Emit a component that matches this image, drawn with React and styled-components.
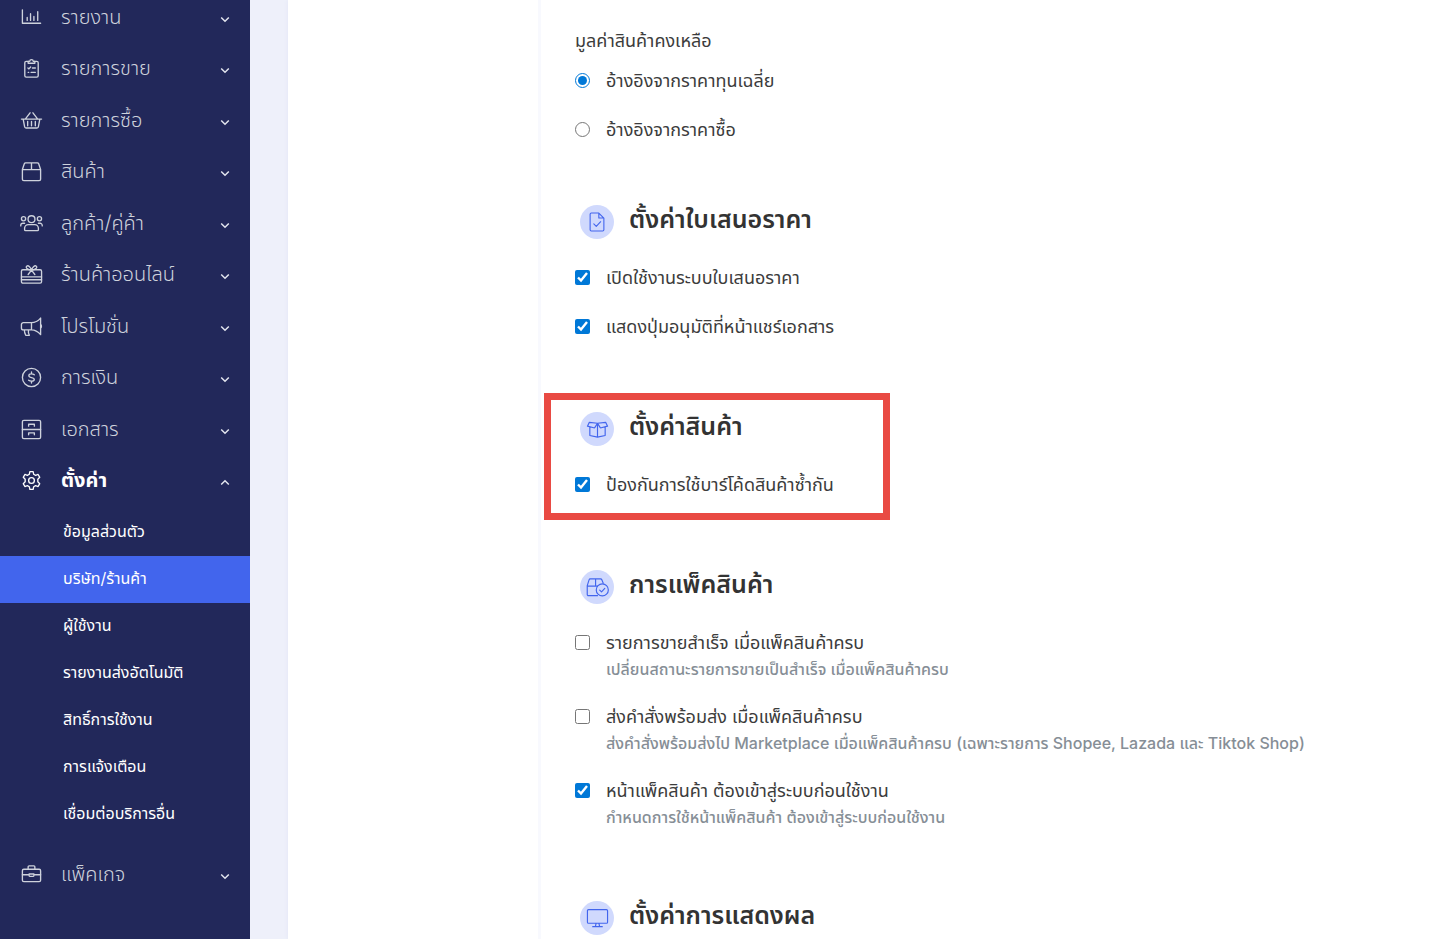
import React, { useState } from "react";
import styled, { createGlobalStyle, css } from "styled-components";

const GlobalStyle = createGlobalStyle`
  *, *::before, *::after { box-sizing: border-box; }
  body {
    margin: 0;
    background: #eef0fa;
    color: #3c3c3c;
    font-family: Inter, "Noto Sans Thai", "Noto Sans", sans-serif;
  }
`;

const Page = styled.div`
  display: flex;
  min-height: 100vh;
  max-height: 100vh;
  overflow: hidden;
`;

const Sidebar = styled.nav`
  flex: 0 0 250px;
  background: #22285a;
  overflow: hidden;
`;

const MenuList = styled.ul`
  list-style: none;
  margin: -7px 0 0;
  padding: 0;
`;

const MenuEntry = styled.li`
  &:nth-child(even) { margin-bottom: 1px; }
`;

const MenuButton = styled.button`
  display: flex;
  align-items: center;
  width: 100%;
  height: 51px;
  padding: 0 19px 3px 20px;
  border: 0;
  background: none;
  color: ${(p) => (p.$open ? "#ffffff" : "#ced2dc")};
  font-family: inherit;
  font-size: 20px;
  font-weight: ${(p) => (p.$open ? 700 : 300)};
  text-align: left;
  cursor: pointer;
`;

const MenuLabel = styled.span`
  flex: 1;
  margin-left: 18px;
  line-height: 24px;
  white-space: nowrap;
`;

const Submenu = styled.ul`
  list-style: none;
  margin: 2px 0 0;
  padding: 0 0 11px;
`;

const SubLink = styled.a`
  display: block;
  height: 47px;
  padding-left: 63px;
  line-height: 45px;
  font-size: 16px;
  color: #ffffff;
  text-decoration: none;
  white-space: nowrap;
  ${(p) => p.$active && css`background: #4265ed;`}
`;

const Main = styled.main`
  flex: 1;
  display: grid;
  grid-template-columns: 253px 1fr;
  margin-left: 38px;
  min-width: 0;
  background: #ffffff;
  box-shadow: 0 0 4px #e2e5f4;
`;

const Aside = styled.div`
  border-right: 3px solid #f8f9fe;
`;

const Content = styled.div`
  padding: 25px 34px 0;
  min-width: 0;
`;

const RadioGroup = styled.fieldset`
  margin: 0 0 51px;
  padding: 0;
  border: 0;
`;

const GroupTitle = styled.legend`
  padding: 0;
  height: 31px;
  line-height: 31px;
  font-size: 18px;
`;

const Section = styled.section`
  position: relative;
  width: fit-content;
  margin-bottom: 61px;
`;

const Highlight = styled.div`
  position: absolute;
  inset: -19px -56px -11px -31px;
  border: 7px solid #e94a43;
  pointer-events: none;
`;

const SectionHead = styled.header`
  display: flex;
  align-items: center;
  height: 34px;
  margin: 0 0 14px 5px;
  gap: 15px;
`;

const Badge = styled.span`
  display: grid;
  place-items: center;
  width: 34px;
  height: 34px;
  border-radius: 50%;
  background: #d0d9fd;
  color: #4265ed;
`;

const SectionTitle = styled.h2`
  margin: 0;
  padding-bottom: 6px;
  line-height: 30px;
  font-size: 25px;
  font-weight: 600;
  color: #333333;
  white-space: nowrap;
`;

const OptionRow = styled.label`
  display: grid;
  grid-template-columns: 15px auto;
  column-gap: 16px;
  align-items: center;
  width: fit-content;
  padding: 12px 0;
  cursor: pointer;
`;

const Tick = styled.input`
  width: 15px;
  height: 15px;
  margin: 0;
  accent-color: #0078d7;
`;

const OptionText = styled.span`
  line-height: 25px;
  font-size: 18px;
  white-space: nowrap;
`;

const OptionNote = styled.small`
  grid-column: 2;
  padding-top: 4px;
  line-height: 21px;
  font-size: 16px;
  font-weight: 500;
  color: #868e96;
  white-space: nowrap;
`;

const Svg = ({ size = 23, w = 1.4, children }) => (
  <svg width={size} height={size} viewBox="0 0 24 24" fill="none" stroke="currentColor"
    strokeWidth={w} strokeLinecap="round" strokeLinejoin="round" aria-hidden="true">
    {children}
  </svg>
);

const icons = {
  chart: <path d="M2.500 4v14h19M7.500 15v-3M11 15V8M14.500 15v-4M18.500 15V6" />,
  clipboard: <><path d="M9 4.500H6.500a1.500 1.500 0 0 0-1.500 1.500v13.500A1.500 1.500 0 0 0 6.500 21h11a1.500 1.500 0 0 0 1.500-1.500V6A1.500 1.500 0 0 0 17.500 4.500H15" /><path d="M8.500 6.500h7V4.500h-1.700a1.800 1.800 0 0 0-3.600 0H8.500z" /><path d="M8.300 11.500l1 .9 1.800-2M13 11.500h3M8.500 16h.6M11.500 16H16" /></>,
  basket: <path d="M1.500 10.500h21M3.300 10.500l1.500 8a1.500 1.500 0 0 0 1.500 1.300h11.400a1.500 1.500 0 0 0 1.500-1.300l1.500-8M5.500 10.500l5-6.500M18.500 10.500l-5-6.500M8 13v4.500M12 13v4.500M16 13v4.500" />,
  box: <path d="M2.500 10v10a1.500 1.500 0 0 0 1.500 1.500h16a1.500 1.500 0 0 0 1.500-1.500V10M2.500 10l2-6A1.500 1.500 0 0 1 6 3h12a1.500 1.500 0 0 1 1.500 1l2 6zM12 3v7" />,
  people: <><circle cx="12" cy="7.500" r="3.600" /><circle cx="3.700" cy="7" r="2.200" /><circle cx="20.300" cy="7" r="2.200" /><path d="M5.800 19.500a1 1 0 0 1-1-1V17a3.800 3.800 0 0 1 3.800-3.800h6.800a3.800 3.800 0 0 1 3.800 3.800v1.500a1 1 0 0 1-1 1zM.8 14.500v-.5a2.300 2.300 0 0 1 2.300-2.300h1.700M23.200 14.500v-.5a2.300 2.300 0 0 0-2.300-2.300h-1.700" /></>,
  gift: <><rect x="1.500" y="7" width="21" height="14" rx="1.500" /><path d="M1.500 14.500h21M1.500 17.500h21M12 7.500L8.500 12M12 7.500l3.500 4.500M12 7.500C11 4 8.500 2 7 3.300S7.500 7 12 7.500c4.500-.5 6.500-2.900 5-4.200S13 4 12 7.500z" /></>,
  horn: <path d="M12 8H3.500a2 2 0 0 0-2 2v3.500a2 2 0 0 0 2 2H12zM12 8c4 0 7.500-2.500 9.500-4.800v17.300c-2-2.300-5.500-5-9.500-5M21.500 9.800c1.200.8 1.200 3.200 0 4M4.500 15.500c0 2 .5 3.700 1.500 5.700h3.800c-1-2-1.300-3.700-1-5.700" />,
  coin: <><circle cx="12" cy="12" r="9.500" /><path d="M12 6.200v2M12 15.800v2M14.900 9.200c-.8-.7-1.800-1-2.900-1-1.600 0-2.800.7-2.800 1.900 0 2.700 5.700 1.200 5.700 3.900 0 1.200-1.300 1.800-2.900 1.800-1.200 0-2.200-.3-3-1" /></>,
  cabinet: <><rect x="2.500" y="2.500" width="19" height="19" rx="1.500" /><path d="M2.500 12h19M9 8.500V6.500h6v2M9 17.500v-2h6v2" /></>,
  gear: <><circle cx="12" cy="12" r="3" /><path d="M10.300 2.800h3.400l.6 2.700 2 1.100 2.600-.9 1.700 3-2 1.900v2.800l2 1.900-1.700 3-2.600-.9-2 1.100-.6 2.700h-3.400l-.6-2.700-2-1.100-2.600.9-1.700-3 2-1.900v-2.800l-2-1.900 1.700-3 2.600.9 2-1.100z" /></>,
  briefcase: <><rect x="2.500" y="6.500" width="19" height="13" rx="1.500" /><path d="M8.500 6.500V4a1 1 0 0 1 1-1h5a1 1 0 0 1 1 1v2.500M2.500 12.300h7M14.500 12.300h7M9.500 11.500h5v1.500a1 1 0 0 1-1 1h-3a1 1 0 0 1-1-1z" /></>,
  doc: <><path d="M4.500 3.500A1.300 1.300 0 0 1 5.800 2.200H14l5.500 5.500v12.800a1.300 1.300 0 0 1-1.300 1.300H5.800a1.300 1.300 0 0 1-1.300-1.300zM14 2.200v5.500h5.500" /><path d="M8.500 14l2.700 2.700 4.800-5" /></>,
  openBox: <path d="M3.500 4.500L12 5.500 9.300 9.800a1 1 0 0 1-1.200.4L1.500 8.500zM20.500 4.500L12 5.500l2.700 4.300a1 1 0 0 0 1.200.4l6.600-1.700zM4 9.500v8.700l8 1.800 8-1.800V9.500M12 5.500V20" />,
  packed: <><path d="M12 20.500H2.500a1.200 1.200 0 0 1-1.200-1.200V10l1.900-6a1.400 1.400 0 0 1 1.300-1h10.700a1.400 1.400 0 0 1 1.300 1L18 7.500M1.300 10.500H12M10 3v7.500" /><circle cx="17" cy="14.500" r="6.300" /><path d="M14.300 14.700l1.900 1.800 3.400-3.500" /></>,
  screen: <path d="M2.700 2.700h18.600a1.200 1.200 0 0 1 1.200 1.200v11.900a1.200 1.200 0 0 1-1.200 1.200H2.700a1.200 1.200 0 0 1-1.200-1.200V3.900a1.200 1.200 0 0 1 1.200-1.200zM10.500 17l-.7 3.500M13.500 17l.7 3.500M7 20.500h10" />,
};

const ChevronSvg = styled.svg`
  margin-top: 4px;
  fill: none;
  stroke: #e3e5ee;
  stroke-width: 1.5;
`;

const Chevron = ({ up }) => (
  <ChevronSvg width="12" height="12" viewBox="0 0 12 12" aria-hidden="true">
    <path d={up ? "M2.200 8.500L6 4.700 9.800 8.500" : "M2.200 4.500L6 8.300 9.800 4.500"} />
  </ChevronSvg>
);

const menu = [
  ["chart", "รายงาน"],
  ["clipboard", "รายการขาย"],
  ["basket", "รายการซื้อ"],
  ["box", "สินค้า"],
  ["people", "ลูกค้า/คู่ค้า"],
  ["gift", "ร้านค้าออนไลน์"],
  ["horn", "โปรโมชั่น"],
  ["coin", "การเงิน"],
  ["cabinet", "เอกสาร"],
  ["gear", "ตั้งค่า", [
    "ข้อมูลส่วนตัว",
    "บริษัท/ร้านค้า",
    "ผู้ใช้งาน",
    "รายงานส่งอัตโนมัติ",
    "สิทธิ์การใช้งาน",
    "การแจ้งเตือน",
    "เชื่อมต่อบริการอื่น",
  ]],
  ["briefcase", "แพ็คเกจ"],
];

const sections = [
  { icon: "doc", size: 22, title: "ตั้งค่าใบเสนอราคา", options: [
    { text: "เปิดใช้งานระบบใบเสนอราคา", on: true },
    { text: "แสดงปุ่มอนุมัติที่หน้าแชร์เอกสาร", on: true },
  ] },
  { icon: "openBox", title: "ตั้งค่าสินค้า", highlight: true, options: [
    { text: "ป้องกันการใช้บาร์โค้ดสินค้าซ้ำกัน", on: true },
  ] },
  { icon: "packed", title: "การแพ็คสินค้า", options: [
    { text: "รายการขายสำเร็จ เมื่อแพ็คสินค้าครบ", note: "เปลี่ยนสถานะรายการขายเป็นสำเร็จ เมื่อแพ็คสินค้าครบ" },
    { text: "ส่งคำสั่งพร้อมส่ง เมื่อแพ็คสินค้าครบ", note: "ส่งคำสั่งพร้อมส่งไป Marketplace เมื่อแพ็คสินค้าครบ (เฉพาะรายการ Shopee, Lazada และ Tiktok Shop)" },
    { text: "หน้าแพ็คสินค้า ต้องเข้าสู่ระบบก่อนใช้งาน", note: "กำหนดการใช้หน้าแพ็คสินค้า ต้องเข้าสู่ระบบก่อนใช้งาน", on: true },
  ] },
  { icon: "screen", title: "ตั้งค่าการแสดงผล", options: [] },
];

function Option({ type = "checkbox", name, text, note, on }) {
  return (
    <OptionRow>
      <Tick type={type} name={name} defaultChecked={on} />
      <OptionText>{text}</OptionText>
      {note && <OptionNote>{note}</OptionNote>}
    </OptionRow>
  );
}

export default function App() {
  const [open, setOpen] = useState("gear");
  return (
    <>
      <GlobalStyle />
      <Page>
        <Sidebar>
          <MenuList>
            {menu.map(([icon, label, items]) => (
              <MenuEntry key={icon}>
                <MenuButton type="button" $open={open === icon} aria-expanded={open === icon}
                  onClick={() => setOpen(open === icon ? "" : icon)}>
                  <Svg>{icons[icon]}</Svg>
                  <MenuLabel>{label}</MenuLabel>
                  <Chevron up={open === icon} />
                </MenuButton>
                {items && open === icon && (
                  <Submenu>
                    {items.map((item, i) => (
                      <li key={item}><SubLink href="#" $active={i === 1}>{item}</SubLink></li>
                    ))}
                  </Submenu>
                )}
              </MenuEntry>
            ))}
          </MenuList>
        </Sidebar>
        <Main>
          <Aside />
          <Content>
            <RadioGroup>
              <GroupTitle>มูลค่าสินค้าคงเหลือ</GroupTitle>
              <Option type="radio" name="stock-value" text="อ้างอิงจากราคาทุนเฉลี่ย" on />
              <Option type="radio" name="stock-value" text="อ้างอิงจากราคาซื้อ" />
            </RadioGroup>
            {sections.map((s) => (
              <Section key={s.icon}>
                <SectionHead>
                  <Badge><Svg size={s.size} w={1.2}>{icons[s.icon]}</Svg></Badge>
                  <SectionTitle>{s.title}</SectionTitle>
                </SectionHead>
                {s.options.map((o) => <Option key={o.text} {...o} />)}
                {s.highlight && <Highlight />}
              </Section>
            ))}
          </Content>
        </Main>
      </Page>
    </>
  );
}
